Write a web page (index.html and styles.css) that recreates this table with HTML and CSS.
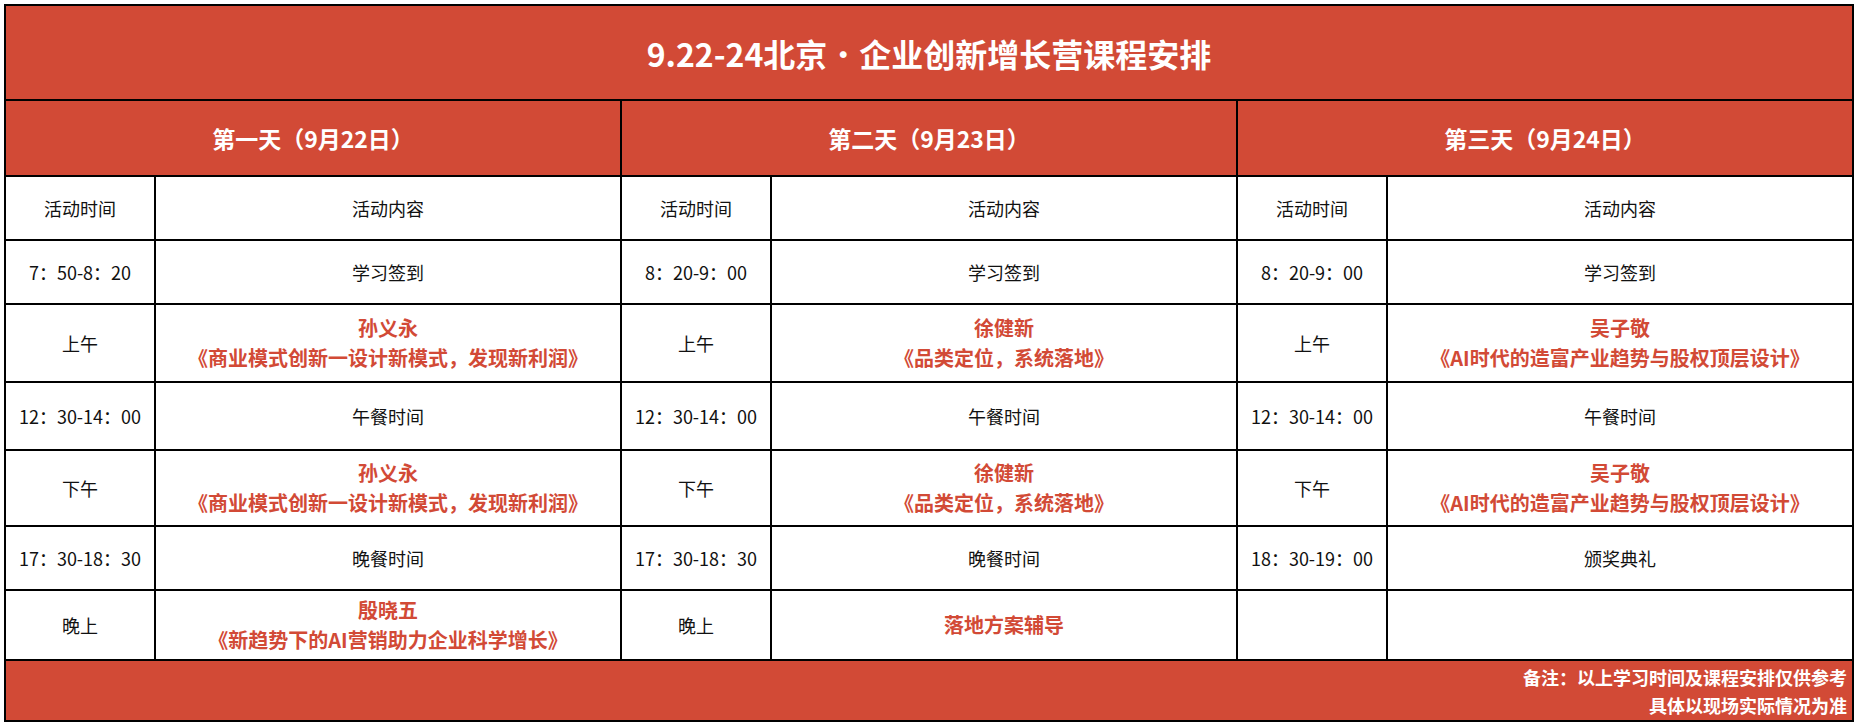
FILE: index.html
```html
<!DOCTYPE html>
<html lang="zh-CN">
<head>
<meta charset="utf-8">
<title>9.22-24北京·企业创新增长营课程安排</title>
<link rel="stylesheet" href="styles.css">
</head>
<body>
<div class="sheet">
  <div class="cell title span6">9.22-24北京<span class="dot">·</span>企业创新增长营课程安排</div>

  <div class="cell day span2">第一天（9月22日）</div>
  <div class="cell day span2">第二天（9月23日）</div>
  <div class="cell day span2">第三天（9月24日）</div>

  <div class="cell">活动时间</div><div class="cell">活动内容</div>
  <div class="cell">活动时间</div><div class="cell">活动内容</div>
  <div class="cell">活动时间</div><div class="cell">活动内容</div>

  <div class="cell">7：50-8：20</div><div class="cell">学习签到</div>
  <div class="cell">8：20-9：00</div><div class="cell">学习签到</div>
  <div class="cell">8：20-9：00</div><div class="cell">学习签到</div>

  <div class="cell">上午</div><div class="cell hl">孙义永<br>《商业模式创新一设计新模式，发现新利润》</div>
  <div class="cell">上午</div><div class="cell hl">徐健新<br>《品类定位，系统落地》</div>
  <div class="cell">上午</div><div class="cell hl">吴子敬<br>《AI时代的造富产业趋势与股权顶层设计》</div>

  <div class="cell">12：30-14：00</div><div class="cell">午餐时间</div>
  <div class="cell">12：30-14：00</div><div class="cell">午餐时间</div>
  <div class="cell">12：30-14：00</div><div class="cell">午餐时间</div>

  <div class="cell">下午</div><div class="cell hl">孙义永<br>《商业模式创新一设计新模式，发现新利润》</div>
  <div class="cell">下午</div><div class="cell hl">徐健新<br>《品类定位，系统落地》</div>
  <div class="cell">下午</div><div class="cell hl">吴子敬<br>《AI时代的造富产业趋势与股权顶层设计》</div>

  <div class="cell">17：30-18：30</div><div class="cell">晚餐时间</div>
  <div class="cell">17：30-18：30</div><div class="cell">晚餐时间</div>
  <div class="cell">18：30-19：00</div><div class="cell">颁奖典礼</div>

  <div class="cell">晚上</div><div class="cell hl">殷晓五<br>《新趋势下的AI营销助力企业科学增长》</div>
  <div class="cell">晚上</div><div class="cell hl">落地方案辅导</div>
  <div class="cell"></div><div class="cell"></div>

  <div class="cell footer span6">
    <p class="note">备注：以上学习时间及课程安排仅供参考</p>
    <p class="note">具体以现场实际情况为准</p>
  </div>
</div>
</body>
</html>
```

FILE: styles.css
```css
html, body {
  background: #ffffff;
}
body {
  margin: 4px 0 0 4px;
  font-family: "Noto Sans CJK SC", "Noto Sans", "Liberation Sans", sans-serif;
  color: #111111;
}
.sheet {
  display: grid;
  grid-template-columns: 148px 464px 148px 464px 148px 464px;
  grid-template-rows: 93px 74px 62px 62px 76px 66px 74px 62px 68px 59px;
  gap: 2px;
  padding: 2px;
  background: #000000;
  width: max-content;
}
.cell {
  background: #ffffff;
  display: flex;
  align-items: center;
  justify-content: center;
  text-align: center;
  font-size: 18px;
  line-height: 30px;
}
.span2 { grid-column: span 2; }
.span6 { grid-column: span 6; }
.title {
  background: #d24a36;
  color: #ffffff;
  font-size: 32px;
  font-weight: 700;
}
.dot {
  font-weight: 400;
}
.day {
  background: #d24a36;
  color: #ffffff;
  font-size: 23px;
  font-weight: 700;
}
.hl {
  color: #d24a36;
  font-weight: 700;
  font-size: 20px;
}
.footer {
  background: #d24a36;
  color: #ffffff;
  flex-direction: column;
  align-items: flex-end;
  justify-content: center;
  padding-right: 5px;
}
.note {
  margin: 0;
  font-size: 18px;
  font-weight: 700;
  line-height: 28px;
}
```
